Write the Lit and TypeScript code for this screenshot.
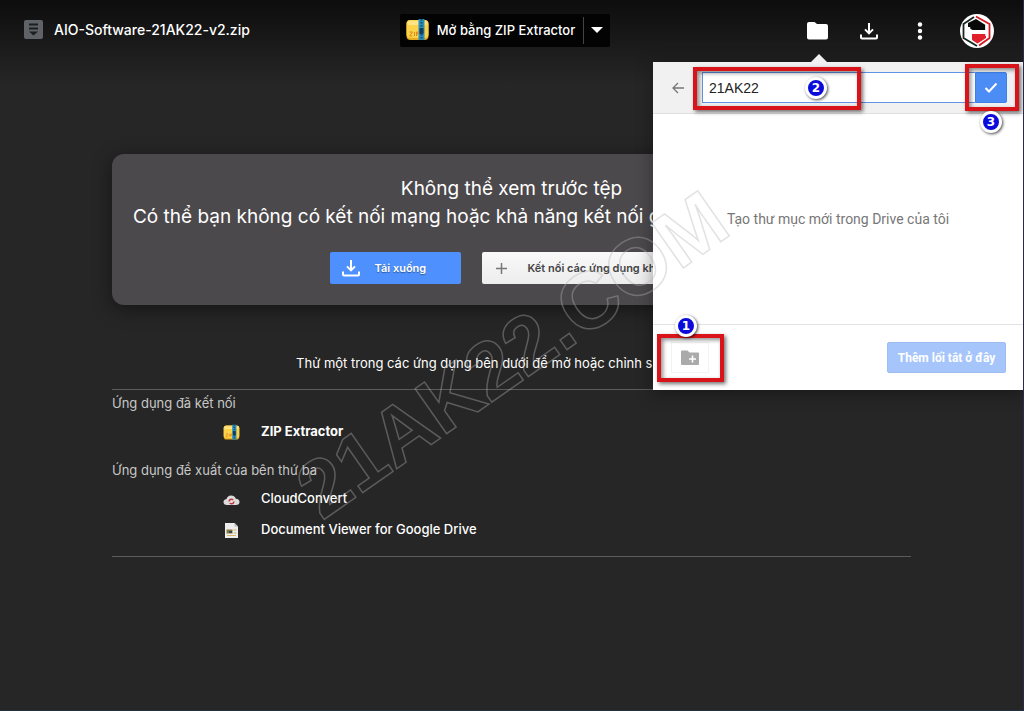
import { LitElement, html, css, svg } from "lit";
import { customElement, state } from "lit/decorators.js";

const downloadIcon = html`<svg class="glyph" viewBox="0 0 20 20" aria-hidden="true">
  <path d="M10 2v10M6 8.4l4 4 4-4M2 13.4v3.2q0 1 1 1h14q1 0 1-1v-3.2" fill="none" stroke="currentColor" stroke-width="2" />
</svg>`;

const zipShape = svg`
  <rect x="1" y="2" width="22" height="20" rx="4" fill="#e9a91c" />
  <rect x="1" y="2" width="22" height="18" rx="4" fill="#fbd34a" />
  <rect x="2" y="3" width="20" height="4" rx="2" fill="#fde486" />
  <rect x="13" y="1" width="6" height="21" fill="#2b8cb8" />
  <path d="M16 1v21" stroke="#174f78" stroke-width="2" stroke-dasharray="1.5 1.5" />
  <rect x="14" y="10" width="4" height="6" rx="1" fill="#123c60" />
  <path d="M4 14h3l-3 4h3M9 14v4M11 18v-4h1.500v2h-1.500" stroke="#e08a1a" stroke-width="1" fill="none" />`;

@customElement("step-mark")
export class StepMark extends LitElement {
  static styles = css`
    :host {
      display: grid;
      place-items: center;
      box-sizing: border-box;
      width: 22px;
      height: 22px;
      border: 3px solid #fff;
      border-radius: 50%;
      background: #0b0bdc;
      box-shadow: 1px 1px 3px rgba(0, 0, 0, 0.7);
      color: #fff;
      font: bold 12px/16px "DejaVu Sans", sans-serif;
    }
  `;
  render() {
    return html`<slot></slot>`;
  }
}

@customElement("folder-panel")
export class FolderPanel extends LitElement {
  static styles = css`
    :host {
      display: block;
      background: #fff;
      box-shadow: 0 4px 16px rgba(0, 0, 0, 0.35);
      font-family: "Liberation Sans", Arial, sans-serif;
    }
    .pointer {
      position: absolute;
      left: 158px;
      top: -8px;
      border: 8px solid transparent;
      border-top: 0;
      border-bottom-color: #f1f1f1;
    }
    button {
      padding: 0;
      border: 0;
      font: inherit;
      cursor: pointer;
    }
    .head {
      display: grid;
      grid-template-columns: 49px 1fr 32px;
      align-items: center;
      padding: 10px 16px 10px 0;
      border-bottom: 1px solid #dedede;
      background: #f1f1f1;
    }
    .back {
      display: grid;
      place-items: center;
      height: 31px;
      background: none;
      color: #777;
    }
    .back svg {
      width: 12px;
      height: 12px;
    }
    .marked {
      position: relative;
    }
    .name {
      display: block;
      box-sizing: border-box;
      width: 100%;
      height: 31px;
      padding: 0 6px;
      border: 1px solid #5f93e6;
      border-right: 0;
      border-radius: 0;
      outline: 0;
      background: #fff;
      color: #222;
      font: 14px "Liberation Sans", Arial, sans-serif;
    }
    .ok {
      display: grid;
      place-items: center;
      width: 32px;
      height: 31px;
      border: 1px solid #3f7fe8;
      border-radius: 0 2px 2px 0;
      background: #4b8cf5;
    }
    .frame {
      position: absolute;
      box-sizing: border-box;
      border: 4px solid #d8131a;
      box-shadow: 2px 2px 4px rgba(0, 0, 0, 0.55), inset 2px 2px 4px rgba(0, 0, 0, 0.45);
      pointer-events: none;
    }
    .frame-name { left: -9px; top: -5px; width: 168px; height: 43px; }
    .frame-ok { left: -10px; top: -8px; width: 54px; height: 47px; }
    .frame-new { left: -14px; top: -8px; width: 67px; height: 48px; }
    step-mark { position: absolute; }
    .mark-name { left: 103px; top: 5px; }
    .mark-ok { left: 5px; top: 39px; }
    .mark-new { left: 4px; top: -27px; }
    .body {
      display: grid;
      place-items: center;
      height: 210px;
      color: #777;
      font: 14px/20px Roboto, sans-serif;
    }
    .foot {
      display: flex;
      justify-content: space-between;
      padding: 17px 17px 17px 18px;
      border-top: 1px solid #e3e3e3;
    }
    .new {
      display: grid;
      place-items: center;
      width: 38px;
      height: 31px;
      border: 1px solid #f3f3f3;
      background: #fff;
    }
    .add {
      width: 119px;
      height: 31px;
      border: 1px solid #9dbdf2;
      border-radius: 2px;
      background: #a6c5fa;
      color: #fff;
      font: bold 12px Roboto, sans-serif;
    }
  `;

  @state() private name = "21AK22";

  render() {
    return html`
      <span class="pointer"></span>
      <div class="head">
        <button class="back" aria-label="Quay lại">
          <svg viewBox="0 0 12 12"><path d="M12 6H1M6 1 1 6l5 5" fill="none" stroke="currentColor" stroke-width="1.3" /></svg>
        </button>
        <div class="marked">
          <input class="name" aria-label="Tên thư mục" .value=${this.name}
            @input=${(e: Event) => (this.name = (e.target as HTMLInputElement).value)} />
          <span class="frame frame-name"></span>
          <step-mark class="mark-name">2</step-mark>
        </div>
        <div class="marked">
          <button class="ok" aria-label="Tạo thư mục">
            <svg width="14" height="12" viewBox="0 0 14 12"><path d="M1.500 6 5 9.500 12.500 1.500" fill="none" stroke="#fff" stroke-width="2" /></svg>
          </button>
          <span class="frame frame-ok"></span>
          <step-mark class="mark-ok">3</step-mark>
        </div>
      </div>
      <div class="body">Tạo thư mục mới trong Drive của tôi</div>
      <div class="foot">
        <div class="marked">
          <button class="new" aria-label="Thư mục mới">
            <svg width="18" height="16" viewBox="0 0 18 16">
              <path d="M0 1.500Q0 .5 1 .5h5.500L8.500 2.500H17q1 0 1 1V14q0 1-1 1H1q-1 0-1-1Z" fill="#aaa" />
              <path d="M11.500 5.500v7M8 9h7" stroke="#fff" stroke-width="1.600" />
            </svg>
          </button>
          <span class="frame frame-new"></span>
          <step-mark class="mark-new">1</step-mark>
        </div>
        <button class="add">Thêm lối tắt ở đây</button>
      </div>
    `;
  }
}

@customElement("app-root")
export class AppRoot extends LitElement {
  static styles = css`
    :host {
      display: block;
      position: relative;
      box-sizing: border-box;
      min-height: 100vh;
      overflow: hidden;
      border-right: 1px solid #262c48;
      border-bottom: 1px solid #20323e;
      background: linear-gradient(#0d0d0d, #262626 84px) #262626;
      color: #fff;
      font-family: Inter, "Open Sans", sans-serif;
    }
    button {
      padding: 0;
      border: 0;
      background: none;
      color: inherit;
      font: inherit;
      cursor: pointer;
    }
    a {
      color: inherit;
      text-decoration: none;
    }
    .glyph {
      width: 20px;
      height: 20px;
    }
    .bar {
      display: grid;
      grid-template-columns: 1fr auto 1fr;
      align-items: center;
      height: 60px;
      padding: 0 29px 0 16px;
    }
    .file {
      display: flex;
      align-items: center;
      gap: 11px;
      padding: 0 0 2px 8px;
      font-size: 14px;
      font-weight: 500;
    }
    .open {
      display: flex;
      align-items: center;
      height: 33px;
      border-radius: 2px;
      background: #030303;
      font-size: 13px;
      font-weight: 500;
    }
    .open-with {
      display: flex;
      align-items: center;
      gap: 7px;
      height: 27px;
      padding: 0 8px 0 5px;
      border-right: 1px solid #444;
    }
    .more {
      display: grid;
      place-items: center;
      width: 26px;
      height: 33px;
    }
    .tools {
      display: flex;
      justify-content: flex-end;
      align-items: center;
      gap: 30px;
      padding-top: 2px;
    }
    .tools button {
      display: grid;
      place-items: center;
    }
    .tool {
      width: 21px;
      height: 34px;
    }
    .main {
      max-width: 799px;
      margin: 94px auto 0;
      padding: 0 16px;
    }
    .card {
      padding: 21px 0;
      border-radius: 12px;
      background: #4c494c;
      box-shadow: 0 4px 20px rgba(0, 0, 0, 0.45);
      text-align: center;
    }
    .msg {
      margin: 0;
      font-size: 19px;
      font-weight: 400;
      line-height: 28px;
      white-space: nowrap;
    }
    .actions {
      display: flex;
      justify-content: center;
      gap: 21px;
      margin-top: 21px;
    }
    .action {
      display: flex;
      align-items: center;
      box-sizing: border-box;
      height: 32px;
      border-radius: 2px;
      font-size: 11px;
      font-weight: 600;
      white-space: nowrap;
    }
    .primary {
      gap: 14px;
      width: 131px;
      padding-left: 11px;
      background: #4d90fe;
      text-shadow: 0 1px 1px rgba(0, 0, 0, 0.4);
    }
    .plain {
      gap: 20px;
      width: 212px;
      padding-left: 13px;
      background: linear-gradient(#f9f9f9, #ededed);
      color: #444;
    }
    .hint {
      margin: 48px 0 16px;
      font-size: 13px;
      line-height: 20px;
      text-align: center;
      white-space: nowrap;
    }
    .apps {
      padding-bottom: 10px;
      border: 1px solid #5c5c5c;
      border-width: 1px 0;
    }
    .group {
      margin: 0;
      color: #c8c8c8;
      font-size: 13px;
      font-weight: 400;
      line-height: 27px;
    }
    .list {
      margin: 0 0 9px;
      padding: 0 0 0 111px;
      list-style: none;
      font-size: 13px;
      font-weight: 500;
    }
    .list:last-child {
      margin-bottom: 0;
    }
    .app {
      display: flex;
      align-items: center;
      gap: 21px;
      box-sizing: border-box;
      height: 31px;
      padding-bottom: 4px;
    }
    .app svg {
      width: 17px;
      height: 17px;
      padding-top: 3px;
    }
    .strong {
      font-weight: 700;
    }
    .panel {
      position: absolute;
      top: 62px;
      right: 0;
      width: 370px;
    }
    .watermark {
      position: absolute;
      left: 280px;
      top: 160px;
      width: 480px;
      height: 380px;
      pointer-events: none;
    }
    .watermark text {
      fill: none;
      stroke: #b4b4b4;
      stroke-opacity: 0.38;
      stroke-width: 1.5px;
      font: bold 80px "Liberation Sans", Arial, sans-serif;
    }
  `;

  render() {
    return html`
      <header class="bar">
        <div class="file">
          <svg width="19" height="19" viewBox="0 0 19 19" aria-hidden="true">
            <rect width="19" height="19" rx="2" fill="#5f6267" />
            <path d="M5 3.500h9v2H5zM5 7.500h9v2H5zM5 11.500h9l-4.500 4Z" fill="#1d1e20" />
          </svg>
          <span>AIO-Software-21AK22-v2.zip</span>
        </div>
        <div class="open">
          <button class="open-with">
            <svg width="25" height="24" viewBox="0 0 24 24" aria-hidden="true">${zipShape}</svg>
            Mở bằng ZIP Extractor
          </button>
          <button class="more" aria-label="Ứng dụng khác">
            <svg width="12" height="6" viewBox="0 0 12 6"><path d="M0 0h12L6 6Z" fill="#fff" /></svg>
          </button>
        </div>
        <div class="tools">
          <button class="tool" aria-label="Thêm lối tắt">
            <svg width="21" height="18" viewBox="0 0 21 18"><path d="M0 2q0-2 2-2h5.500l2.500 2H19q2 0 2 2v11.500q0 2-2 2H2q-2 0-2-2Z" fill="#fff" /></svg>
          </button>
          <button class="tool" aria-label="Tải xuống">${downloadIcon}</button>
          <button class="tool" aria-label="Tác vụ khác">
            <svg width="6" height="18" viewBox="0 0 6 18" fill="#fff">
              <circle cx="3" cy="2.500" r="2.200" /><circle cx="3" cy="9" r="2.200" /><circle cx="3" cy="15.500" r="2.200" />
            </svg>
          </button>
          <button aria-label="Tài khoản">
            <svg width="34" height="34" viewBox="0 0 34 34">
              <circle cx="17" cy="17" r="17" fill="#fff" />
              <path d="M16 2.500 29.500 10V24L19 31.500" fill="none" stroke="#d71920" stroke-width="1.800" />
              <path d="M14 3 3.500 10V24L17 32" fill="none" stroke="#14281f" stroke-width="1.800" />
              <path d="M8 9 16 5 25.500 11V16H12.500L8 13.500Z" fill="#080808" />
              <path d="M12 20H26V24L17.500 29.500 12 26Z" fill="#e0202a" />
              <path d="M9 13v12M26.500 11v11" stroke="#fff" stroke-width="2.400" />
            </svg>
          </button>
        </div>
      </header>

      <main class="main">
        <section class="card">
          <h1 class="msg">Không thể xem trước tệp</h1>
          <p class="msg">Có thể bạn không có kết nối mạng hoặc khả năng kết nối gặp phải một số trục trặc...</p>
          <div class="actions">
            <button class="action primary">${downloadIcon}Tải xuống</button>
            <button class="action plain">
              <svg width="13" height="13" viewBox="0 0 13 13" aria-hidden="true"><path d="M6.500 1v11M1 6.500h11" stroke="#777" stroke-width="1.500" /></svg>
              Kết nối các ứng dụng khác...
            </button>
          </div>
        </section>
        <p class="hint">Thử một trong các ứng dụng bên dưới để mở hoặc chỉnh sửa mục này.</p>
        <section class="apps">
          <h2 class="group">Ứng dụng đã kết nối</h2>
          <ul class="list">
            <li class="app strong">
              <svg viewBox="0 0 24 24" aria-hidden="true">${zipShape}</svg>
              <a href="#zip">ZIP Extractor</a>
            </li>
          </ul>
          <h2 class="group">Ứng dụng đề xuất của bên thứ ba</h2>
          <ul class="list">
            <li class="app">
              <svg viewBox="0 0 17 17" aria-hidden="true">
                <path d="M4 14q-3.500 0-3.500-3 0-2.500 3-3Q4.500 4.500 8 4.500t4.800 3.300q3.700.2 3.700 3.200 0 3-3.500 3Z" fill="#dcdcdc" />
                <circle cx="8.500" cy="10.500" r="2.300" fill="#f2dede" stroke="#b93a42" stroke-width="1.500" stroke-dasharray="5 1.500" />
              </svg>
              <a href="#cloudconvert">CloudConvert</a>
            </li>
            <li class="app">
              <svg viewBox="0 0 17 17" aria-hidden="true">
                <path d="M2 1h9.500L15 4.500V16H2Z" fill="#ededed" /><path d="M11.500 1v3.500H15Z" fill="#bbb" />
                <rect x="3.500" y="7.500" width="6" height="4" fill="#8a7a3c" /><path d="M6 9h3v2H6z" fill="#2d4a55" />
                <path d="M10.500 8h3M10.500 11h3M4 13.500h9" stroke="#d9b36a" />
              </svg>
              <a href="#viewer">Document Viewer for Google Drive</a>
            </li>
          </ul>
        </section>
      </main>

      <folder-panel class="panel"></folder-panel>

      <svg class="watermark" viewBox="0 0 480 380" aria-hidden="true">
        <text transform="translate(42 361) rotate(-35)">21AK22.COM</text>
      </svg>
    `;
  }
}
